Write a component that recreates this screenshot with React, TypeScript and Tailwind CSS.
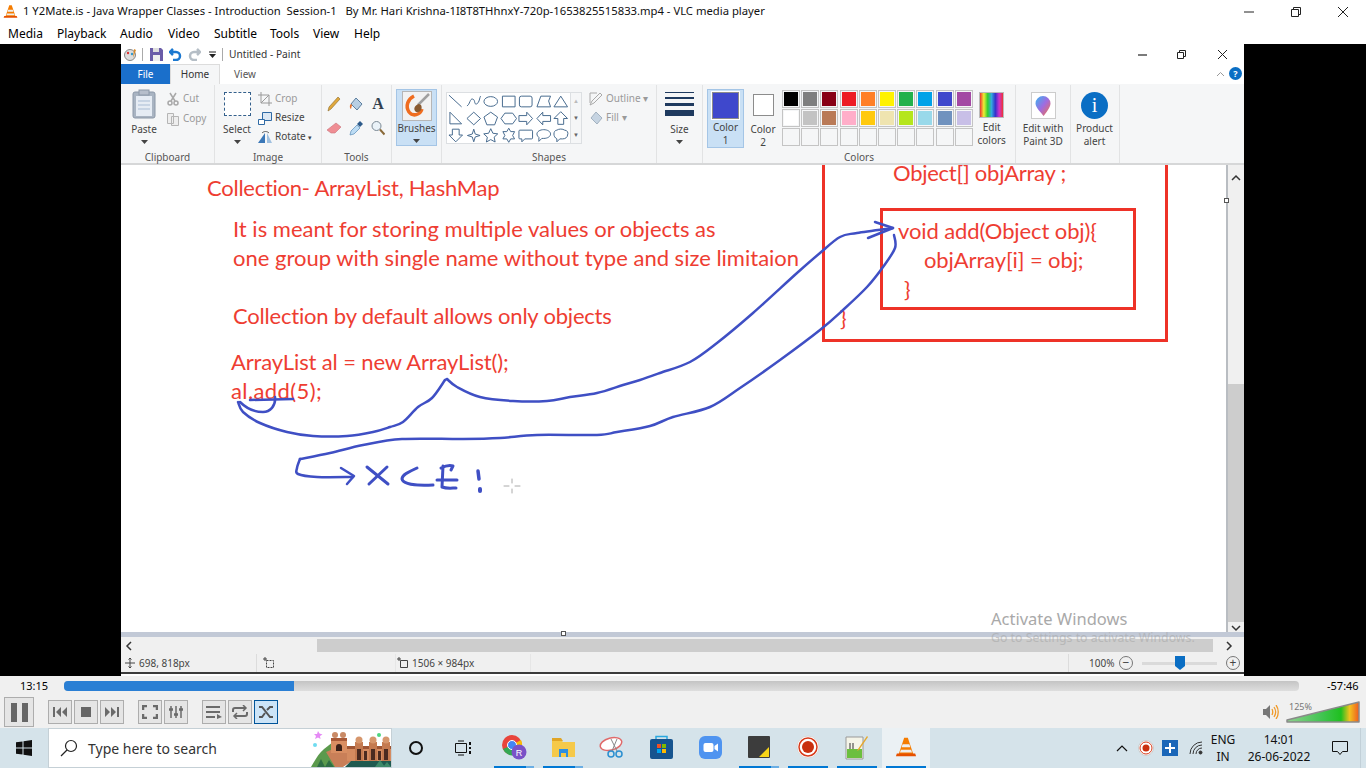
import React from "react";

const Cone = ({ s = 16 }: { s?: number }) => (
  <svg width={s} height={s} viewBox="0 0 24 24">
    <path d="M10 2h4l6 18H4z" fill="#f57c00" />
    <path d="M8.3 9h7.4l1 3.4H7.2zM6.4 15h11.2l1 3H5.4z" fill="#eee" />
    <path d="M2 19h20l1 3H1z" fill="#e65100" />
  </svg>
);

const Menu = () => (
  <div className="flex h-[21px] items-center bg-white pl-[8px] text-[12px] text-black">
    <span className="w-[49px]">Media</span>
    <span className="w-[63px]">Playback</span>
    <span className="w-[48px]">Audio</span>
    <span className="w-[46px]">Video</span>
    <span className="w-[56px]">Subtitle</span>
    <span className="w-[43px]">Tools</span>
    <span className="w-[41px]">View</span>
    <span>Help</span>
  </div>
);

const Title = () => (
  <div className="flex h-[23px] items-center bg-white">
    <div className="w-[23px] pl-[3px]"><Cone s={15} /></div>
    <span className="flex-1 whitespace-pre text-[11.270px] text-[#111]">1 Y2Mate.is - Java Wrapper Classes - Introduction  Session-1   By Mr. Hari Krishna-1I8T8THhnxY-720p-1653825515833.mp4 - VLC media player</span>
    <div className="flex w-[141px] items-center text-[#222]">
      <div className="flex w-[47px] justify-center"><svg width="12" height="12"><path d="M1 6h10" stroke="#222" /></svg></div>
      <div className="flex w-[47px] justify-center"><svg width="12" height="12" fill="none" stroke="#222"><path d="M1.500 3.500h7v7h-7zM3.500 3.500v-2h7v7h-2" /></svg></div>
      <div className="flex w-[47px] justify-center"><svg width="12" height="12" stroke="#222"><path d="M1 1l10 10M11 1L1 11" /></svg></div>
    </div>
  </div>
);

const Caret = () => <svg width="7" height="4" className="block"><path d="M0 0h7L3.500 4z" fill="#444" /></svg>;

const Big = ({ w, icon, lines, caret }: { w: string; icon: React.ReactNode; lines: string[]; caret?: boolean }) => (
  <div className={`flex flex-col items-center text-[10px] leading-[13px] text-[#444] ${w}`}>
    <div className="flex h-[38px] items-center justify-center">{icon}</div>
    {lines.map((l) => <span key={l}>{l}</span>)}
    {caret && <div className="mt-[4px]"><Caret /></div>}
  </div>
);

const Group = ({ w, label, children }: { w: string; label: string; children: React.ReactNode }) => (
  <div className={`flex h-full shrink-0 flex-col border-r border-[#e2e3e4] ${w}`}>
    <div className="flex h-[65px] items-start">{children}</div>
    <div className="flex h-[13px] items-center justify-center pt-[2px] text-[10px] text-[#555]">{label}</div>
  </div>
);

const SmallRow = ({ icon, text, gray }: { icon: React.ReactNode; text: React.ReactNode; gray?: boolean }) => (
  <div className={`flex h-[19px] items-center gap-[3px] text-[10px] ${gray ? "text-[#9a9a9a]" : "text-[#444]"}`}>
    <div className="flex w-[14px] justify-center">{icon}</div>
    <span>{text}</span>
  </div>
);

const ShapeCell = ({ d }: { d: string }) => (
  <svg width="17.500" height="17" viewBox="0 0 18 17" fill="none" stroke="#44688c" strokeWidth="1" className="shrink-0"><path d={d} /></svg>
);

const shapes = [
  "M2 2l13 12", "M2 13c3-1 3-8 6-7s1 6 4 5 3-7 4-8", "M2 8.500a7 5 0 1 0 14 0a7 5 0 1 0 -14 0", "M2.500 3h13v11h-13z", "M4.500 3h9a2 2 0 0 1 2 2v7a2 2 0 0 1 -2 2h-9a2 2 0 0 1 -2-2v-7a2 2 0 0 1 2-2z", "M6 3h10l-2 5 2 6H2z", "M9 3l7 11H2z",
  "M3 2l12 12H3z", "M9 2l7 6.500-7 6.500-7-6.500z", "M9 2l7 5-3 8H5L2 7z", "M5 3h8l4 5.500-4 5.500H5L1 8.500z", "M2 5.500h8V2l6 6.500-6 6.500v-3.500H2z", "M16 5.500H8V2L2 8.500 8 15v-3.500h8z", "M9 1.500l7 7h-4v6H6v-6H2z",
  "M5.500 2h7v6H16l-7 7-7-7h3.500z", "M9 2l1.500 5 5 1.500-5 1.500L9 15l-1.500-5-5-1.500 5-1.500z", "M9 1.500l2.200 4.700 5 .6-3.700 3.400 1 5L9 12.700l-4.500 2.500 1-5-3.700-3.400 5-.6z", "M9 1l2 3.500h4L13 8.500l2 3.500h-4l-2 3.500L7 12H3l2-3.500L3 4.500h4z", "M3 3h12a1 1 0 0 1 1 1v7a1 1 0 0 1-1 1H8l-3 3v-3H3a1 1 0 0 1-1-1V4a1 1 0 0 1 1-1z", "M9 2.500c4 0 7 2 7 4.500s-3 4.500-7 4.500H7l-3 3v-4c-1-1-2-2-2-3.500 0-2.500 3-4.500 7-4.500z", "M5 3c2-1.500 6-1.500 8 0 3 0 4 3 3 5 0 2-2 4-5 4H8l-3 3v-3c-2-1-3-3-3-5s1-4 3-4z",
];

const row1 = ["#000000", "#7f7f7f", "#880015", "#ed1c24", "#ff7f27", "#fff200", "#22b14c", "#00a2e8", "#3f48cc", "#a349a4"];
const row2 = ["#ffffff", "#c3c3c3", "#b97a57", "#ffaec9", "#ffc90e", "#efe4b0", "#b5e61d", "#99d9ea", "#7092be", "#c8bfe7"];
const row3 = Array.from({ length: 10 }, () => "#f5f6f7");

const Swatches = ({ colors }: { colors: string[] }) => (
  <div className="flex gap-[1.200px]">
    {colors.map((c, i) => (
      <div key={i} className="h-[18px] w-[18px] border border-[#c4c4c4] bg-[#f5f6f7] p-[1px]">
        <div className="h-full w-full" style={{ background: c }} />
      </div>
    ))}
  </div>
);

const Ribbon = () => (
  <div className="flex h-[81px] border-b-2 border-[#d6d7d8] bg-[#f5f6f7] pt-[1px]">
    <Group w="w-[94px]" label="Clipboard">
      <div className="flex pl-[7px]">
        <Big w="w-[32px]" lines={["Paste"]} caret icon={
          <svg width="24" height="30" viewBox="0 0 24 30"><rect x="1" y="3" width="22" height="26" rx="2" fill="#a9b4c2" stroke="#8c98a8" /><rect x="4" y="7" width="16" height="20" fill="#e6ecf4" /><path d="M6 12h12M6 16h12M6 20h12" stroke="#a9bcd4" /><rect x="7" y="1" width="10" height="5" fill="#b6becb" stroke="#8c98a8" /></svg>
        } />
        <div className="ml-[6px] mt-[4px] flex flex-col gap-[1px]">
          <SmallRow gray text="Cut" icon={<svg width="12" height="14" fill="none" stroke="#a8a8a8" strokeWidth="1.500"><path d="M3 1l5 8M9 1L4 9" /><circle cx="3" cy="11" r="2" /><circle cx="9" cy="11" r="2" /></svg>} />
          <SmallRow gray text="Copy" icon={<svg width="14" height="14" fill="#eee" stroke="#b5b5b5"><path d="M1.500 1.500h6v10h-6zM5.500 4.500h7v9h-7z" /></svg>} />
        </div>
      </div>
    </Group>
    <Group w="w-[107px]" label="Image">
      <div className="flex pl-[5px]">
        <Big w="w-[34px]" lines={["Select"]} caret icon={<div className="h-[24px] w-[27px] border border-dashed border-[#34608c] bg-white" />} />
        <div className="ml-[4px] mt-[4px] flex flex-col">
          <SmallRow gray text="Crop" icon={<svg width="14" height="14" fill="none" stroke="#9a9a9a"><path d="M3 0v11h11M0 3h11v11M3 11L11 3" /></svg>} />
          <SmallRow text="Resize" icon={<svg width="14" height="14" fill="none" stroke="#2f6aa5"><path d="M4.500 1.500h9v8h-9z" fill="#dce8f4" /><path d="M.5 8.500h6v5h-6z" fill="#fff" /></svg>} />
          <SmallRow text={<>Rotate <span className="text-[7px]">▾</span></>} icon={<svg width="15" height="14"><path d="M0 13L7 3v10z" fill="#3b78b8" /><path d="M9 13V3l5 10z" fill="#9fc0e0" /><path d="M4 3c2-2 5-2 7 0" stroke="#555" fill="none" /></svg>} />
        </div>
      </div>
    </Group>
    <Group w="w-[70px]" label="Tools">
      <div className="grid grid-cols-3 gap-x-[8px] gap-y-[8px] pl-[5px] pt-[11px]">
        <svg width="14" height="16" viewBox="0 0 14 16"><path d="M11 1l2 2L4 13l-3 2 1-4z" fill="#e0a83c" stroke="#8a6a2a" strokeWidth=".6" /></svg>
        <svg width="14" height="16" viewBox="0 0 14 16"><path d="M7 2l6 6-5 6-6-6z" fill="#b8cfe4" stroke="#5d7f9f" /><path d="M2 8C0 9 1 13 2 13l1-4z" fill="#e8732c" /></svg>
        <span className="flex w-[14px] justify-center font-['Liberation_Serif',serif] text-[16px] font-bold leading-[16px] text-[#33404f]">A</span>
        <svg width="14" height="16" viewBox="0 0 14 16"><path d="M9 3l5 4-6 6H4L0 10z" fill="#ef8e94" stroke="#c9727a" strokeWidth=".6" /></svg>
        <svg width="14" height="16" viewBox="0 0 14 16"><path d="M1 15l1-4 6-6 3 3-6 6z" fill="#bcdcf4" stroke="#5a8cb8" strokeWidth=".7" /><path d="M8 4l3-3 3 3-3 3z" fill="#2c5a8a" /></svg>
        <svg width="14" height="16" viewBox="0 0 14 16" fill="none"><circle cx="5.500" cy="6" r="4.500" stroke="#7a8894" fill="#eaf2f8" /><path d="M9 9.500l4.500 5" stroke="#8a6a3a" strokeWidth="2" /></svg>
      </div>
    </Group>
    <Group w="w-[50px]" label="">
      <div className="ml-[4px] mt-[4px] flex h-[57px] w-[41px] flex-col items-center border border-[#a4c5e6] bg-[#c9e0f5] text-[10px] leading-[13px] text-[#444]">
        <div className="mt-[1px] flex h-[30px] w-[30px] items-center justify-center border border-[#b6b6b6] bg-[#f2f2f2]">
          <svg width="28" height="28" viewBox="0 0 28 28" fill="none"><path d="M11 4C5 7 2 14 6 20c4 5 11 3 13-3" stroke="#ef6c1f" strokeWidth="3.500" /><path d="M26 2L15 13" stroke="#a0a0a0" strokeWidth="2.500" /><path d="M16 12c-5 1-6 6-3 8 4 1 7-3 5-7z" fill="#8a5a30" /></svg>
        </div>
        <span className="mt-[1px]">Brushes</span>
        <div className="mt-[4px]"><Caret /></div>
      </div>
    </Group>
    <Group w="w-[215px]" label="Shapes">
      <div className="ml-[4px] mt-[7px] flex">
        <div className="flex h-[52px] w-[125px] flex-wrap content-start border border-[#dcdfe2] bg-white">
          {shapes.map((d, i) => <ShapeCell key={i} d={d} />)}
        </div>
        <div className="flex h-[52px] w-[11px] flex-col items-center justify-around border border-l-0 border-[#dcdfe2] text-[6px] leading-[6px] text-[#666]">
          <span className="text-[#bbb]">▲</span><span>▼</span><span>▼</span>
        </div>
        <div className="-mt-[3px] ml-[7px] flex flex-col text-[10px] text-[#999]">
          <SmallRow gray text="Outline ▾" icon={<svg width="14" height="14" fill="none" stroke="#aaa"><path d="M1 13l2-4 8-8 2 2-8 8zM1 1h7M1 1v10" /></svg>} />
          <SmallRow gray text="Fill ▾" icon={<svg width="14" height="14" fill="#c6d4e2" stroke="#a3b2c0"><path d="M7 1l6 6-5 6-6-6z" /></svg>} />
        </div>
      </div>
    </Group>
    <Group w="w-[46px]" label="">
      <Big w="w-[45px]" lines={["Size"]} caret icon={
        <div className="flex w-[29px] flex-col gap-[4px]">
          <div className="h-[1px] bg-[#1f3a5f]" />
          <div className="h-[2px] bg-[#1f3a5f]" />
          <div className="h-[3px] bg-[#1f3a5f]" />
          <div className="h-[6px] bg-[#1f3a5f]" />
        </div>
      } />
    </Group>
    <Group w="w-[313px]" label="Colors">
      <div className="flex">
        <div className="ml-[4px] mt-[4px] flex h-[59px] w-[37px] flex-col items-center border border-[#a4c5e6] bg-[#c9e0f5] text-[10px] leading-[13px] text-[#444]">
          <div className="mt-[2px] h-[29px] w-[27px] border border-[#8c8c8c] bg-[#3f48cc] outline outline-[#fff]" />
          <span className="mt-[2px]">Color</span><span>1</span>
        </div>
        <div className="flex w-[38px] flex-col items-center pt-[9px] text-[10px] leading-[13px] text-[#444]">
          <div className="h-[22px] w-[21px] border border-[#8c8c8c] bg-white" />
          <span className="mt-[7px]">Color</span><span>2</span>
        </div>
        <div className="mt-[5px] flex flex-col gap-[1px]">
          <Swatches colors={row1} /><Swatches colors={row2} /><Swatches colors={row3} />
        </div>
        <div className="ml-[1px] flex w-[36px] flex-col items-center pt-[7px] text-[10px] leading-[13px] text-[#444]">
          <div className="h-[26px] w-[25px] border border-[#bbb] bg-[linear-gradient(90deg,#e33,#ee3,#3c3,#3ad,#33c,#c3c,#e33)]" />
          <span className="mt-[3px]">Edit</span><span>colors</span>
        </div>
      </div>
    </Group>
    <Group w="w-[55px]" label="">
      <div className="flex w-[54px] flex-col items-center pt-[7px] text-[10px] leading-[13px] text-[#444]">
        <div className="flex h-[27px] w-[25px] items-center justify-center border border-[#ccc] bg-white">
          <svg width="16" height="22" viewBox="0 0 16 22"><defs><linearGradient id="p3d" x1="0" y1="0" x2="1" y2="1"><stop offset="0" stopColor="#35b6f2" /><stop offset=".5" stopColor="#a06be0" /><stop offset="1" stopColor="#f9703e" /></linearGradient></defs><path d="M8 1a7.500 7.500 0 0 1 7.500 7.500c0 4-5 10-7 12.500C6.500 18 .5 12.500.5 8.500A7.500 7.500 0 0 1 8 1z" fill="url(#p3d)" /></svg>
        </div>
        <span className="mt-[3px] whitespace-nowrap">Edit with</span><span>Paint 3D</span>
      </div>
    </Group>
    <Group w="w-[49px]" label="">
      <div className="flex w-[47px] flex-col items-center pt-[7px] text-[10px] leading-[13px] text-[#444]">
        <div className="flex h-[27px] w-[27px] items-center justify-center rounded-full bg-[#0a6ec4] font-['Liberation_Serif',serif] text-[20px] text-white">i</div>
        <span className="mt-[3px]">Product</span><span>alert</span>
      </div>
    </Group>
    <div className="flex-1" />
  </div>
);

const smooth = (p: number[][]) => {
  let d = `M${p[0][0]} ${p[0][1]}`;
  for (let i = 0; i < p.length - 1; i++) {
    const a = p[Math.max(i - 1, 0)], b = p[i], c = p[i + 1], e = p[Math.min(i + 2, p.length - 1)];
    d += `C${b[0] + (c[0] - a[0]) / 6} ${b[1] + (c[1] - a[1]) / 6} ${c[0] - (e[0] - b[0]) / 6} ${c[1] - (e[1] - b[1]) / 6} ${c[0]} ${c[1]}`;
  }
  return d;
};

const upperA = [[238, 402], [243, 412], [260, 423], [287, 432], [313, 436], [347, 436], [373, 432], [390, 427], [403, 422], [418, 407], [432, 398], [445, 380]];
const upperB = [[447, 379], [457, 387], [480, 397], [513, 401], [547, 401], [570, 397], [597, 393], [623, 385], [640, 380], [660, 373], [690, 362], [717, 343], [753, 313], [797, 273], [820, 253], [840, 237], [857, 233], [893, 228]];
const lowerA = [[894, 235], [895, 248], [883, 267], [867, 287], [843, 310], [820, 330], [780, 360], [740, 388], [710, 407], [673, 417], [650, 426], [617, 432], [597, 435], [537, 435], [500, 438], [463, 439], [402, 439], [363, 445], [330, 453], [300, 459]];
const lowerB = [[300, 459], [297, 468], [298, 474], [317, 477], [353, 477]];

const Strokes = () => (
  <svg className="absolute inset-0" width="1105" height="467" viewBox="121 165 1105 467" fill="none" stroke="#3f4fc4" strokeWidth="2.500" strokeLinecap="round" strokeLinejoin="round">
    <path d={smooth(upperA)} />
    <path d={smooth(upperB)} />
    <path d="M445 380L447 379" />
    <path d={smooth(lowerA)} />
    <path d={smooth(lowerB)} />
    <path d="M875 222L893 228L868 238" />
    <path d="M341 468L354 476L347 484" />
    <path d="M367 467L388 484M387 467L369 484" strokeWidth="3" />
    <path d="M417 468C408 472 402 475 402 479C403 484 415 486 433 485" strokeWidth="3" />
    <path d="M441 468C445 466 450 465 453 466L451 470M443 466L442 487C447 489 452 488 456 488M437 480H457" strokeWidth="3" />
    <path d="M478 471L479 479" strokeWidth="3.500" />
    <path d="M480 489L480 491" strokeWidth="4" />
    <path d="M250 400L293 399" />
    <path d="M240 402C246 408 254 412 263 412C270 412 276 406 275 397" />
    <path d="M504 486H509M515 486H520M512 479V483M512 489V493" stroke="#aaa" strokeWidth="1" />
  </svg>
);

const Canvas = () => (
  <div className="relative h-[467px] w-[1105px] shrink-0 bg-white font-['Lato',sans-serif] text-[22px] leading-[30px] text-[#ee3d32] whitespace-pre">
    <span className="absolute left-[86px] top-[8px] tracking-[-0.25px]">Collection- ArrayList, HashMap</span>
    <span className="absolute left-[112px] top-[49px]">It is meant for storing multiple values or objects as</span>
    <span className="absolute left-[112px] top-[78px]">one group with single name without type and size limitaion</span>
    <span className="absolute left-[112px] top-[136px] tracking-[-0.2px]">Collection by default allows only objects</span>
    <span className="absolute left-[110px] top-[182px] tracking-[-0.13px]">ArrayList al = new ArrayList();</span>
    <span className="absolute left-[110px] top-[211px] tracking-[0.4px]">al.add(5);</span>
    <div className="absolute left-[701px] top-0 h-[177px] w-[346px] border-[3px] border-t-0 border-[#ee3228]" />
    <div className="absolute left-[759px] top-[43px] h-[102px] w-[256px] border-[3px] border-[#ee3228]" />
    <span className="absolute left-[772px] top-[0px] leading-[16px] tracking-[-0.25px]">Object[] objArray ;</span>
    <span className="absolute left-[777px] top-[51px] tracking-[-0.1px]">void add(Object obj){"{"}</span>
    <span className="absolute left-[803px] top-[80px] tracking-[-0.1px]">objArray[i] = obj;</span>
    <span className="absolute left-[783px] top-[109px]">{"}"}</span>
    <span className="absolute left-[719px] top-[138px]">{"}"}</span>
    <Strokes />
  </div>
);

const VScroll = () => (
  <div className="flex h-[467px] flex-1 flex-col items-center border-l-2 border-[#b9bdc2] bg-[#f0f0f0]">
    <div className="flex h-[17px] items-center pt-[8px] text-[#444]"><svg width="10" height="7" fill="none" stroke="#333" strokeWidth="1.500"><path d="M1 6l4-4 4 4" /></svg></div>
    <div className="mt-[202px] h-[238px] w-full bg-[#cdcdcd]" />
    <div className="mt-[3px] flex h-[7px] items-center"><svg width="10" height="7" fill="none" stroke="#333" strokeWidth="1.500"><path d="M1 1l4 4 4-4" /></svg></div>
  </div>
);

const Status = () => (
  <div className="flex h-[20px] items-center border-b-2 border-[#3c3c3c] bg-[#f0f0f0] text-[10px] text-[#444]">
    <div className="flex h-full w-[136px] items-center gap-[3px] border-r border-[#dcdcdc] pl-[3px]">
      <svg width="12" height="12" fill="none" stroke="#444"><path d="M6 1v10M1 6h10M4.500 2.500L6 1l1.500 1.500M4.500 9.500L6 11l1.500-1.500" /></svg>
      <span>698, 818px</span>
    </div>
    <div className="flex h-full w-[139px] items-center border-r border-[#e6e6e6] pl-[5px]">
      <svg width="13" height="12" fill="none" stroke="#444"><path d="M3 0v4M1 2h4" /><path d="M4.500 3.500h7v7h-7z" strokeDasharray="2 1" /></svg>
    </div>
    <div className="flex h-full w-[135px] items-center gap-[3px] border-r border-[#e6e6e6]">
      <svg width="13" height="12" fill="none" stroke="#444"><path d="M3 0v4M1 2h4M4.500 3.500h7v7h-7z" /></svg>
      <span>1506 × 984px</span>
    </div>
    <div className="flex-1" />
    <div className="flex h-full w-[176px] items-center border-l border-[#dcdcdc] pl-[20px]">
      <span className="w-[30px]">100%</span>
      <div className="flex h-[14px] w-[14px] items-center justify-center rounded-full border border-[#777] text-[12px] leading-none">−</div>
      <div className="relative ml-[9px] h-[3px] w-[75px] bg-[#dadada]">
        <svg width="10" height="14" className="absolute left-[33px] top-[-6px]"><path d="M0 0h10v10l-5 4-5-4z" fill="#0a6ec4" /></svg>
      </div>
      <div className="ml-[9px] flex h-[14px] w-[14px] items-center justify-center rounded-full border border-[#777] text-[12px] leading-none">+</div>
    </div>
  </div>
);

const Paint = () => (
  <div className="relative ml-[121px] flex h-[632px] w-[1123px] flex-col overflow-hidden bg-white">
    <div className="flex h-[20px] items-center bg-white pl-[2px] pt-[1px] text-[10.200px] text-[#333]">
      <svg width="14" height="14" viewBox="0 0 14 14"><circle cx="7" cy="7" r="5.500" fill="#ddd" stroke="#888" /><circle cx="5" cy="5" r="1.200" fill="#d33" /><circle cx="9" cy="6" r="1.200" fill="#39c" /><path d="M11 1l2 1-3 8z" fill="#d88a2a" /></svg>
      <div className="ml-[5px] h-[13px] w-px bg-[#aaa]" />
      <svg className="ml-[7px]" width="13" height="13" viewBox="0 0 13 13"><path d="M0 0h11l2 2v11H0z" fill="#6a5ca8" /><path d="M3 0h6v4H3z" fill="#ddd" /><path d="M3 7h7v6H3z" fill="#eee" /></svg>
      <svg className="ml-[6px]" width="13" height="13" viewBox="0 0 13 13" fill="none" stroke="#1b78d0" strokeWidth="2.500"><path d="M1 4h6a4 4 0 0 1 0 8H4" /><path d="M4 1L1 4l3 3" /></svg>
      <svg className="ml-[6px]" width="13" height="13" viewBox="0 0 13 13" fill="none" stroke="#b5bec6" strokeWidth="2.500"><path d="M12 4H6a4 4 0 0 0 0 8h3" /><path d="M9 1l3 3-3 3" /></svg>
      <svg className="ml-[8px]" width="7" height="7"><path d="M0 1h7" stroke="#222" /><path d="M0 3h7L3.500 7z" fill="#222" /></svg>
      <div className="ml-[6px] h-[13px] w-px bg-[#aaa]" />
      <span className="ml-[6px]">Untitled - Paint</span>
      <div className="flex-1" />
      <div className="flex w-[39px] justify-center"><svg width="11" height="11"><path d="M1 6h9" stroke="#222" strokeWidth="1.200" /></svg></div>
      <div className="flex w-[39px] justify-center"><svg width="11" height="11" fill="none" stroke="#222"><path d="M1.500 3.500h6v6h-6zM3.500 3.500v-2h6v6h-2" /></svg></div>
      <div className="flex w-[43px] justify-center"><svg width="11" height="11" stroke="#222"><path d="M1 1l9 9M10 1l-9 9" /></svg></div>
    </div>
    <div className="flex h-[20px] items-stretch text-[10px]">
      <div className="flex w-[49px] items-center justify-center bg-[#1a6fcb] text-white">File</div>
      <div className="flex w-[50px] items-center justify-center border-x border-t border-[#dcdcdc] bg-[#f5f6f7] text-[#333]">Home</div>
      <div className="flex w-[50px] items-center justify-center text-[#555]">View</div>
      <div className="flex-1" />
      <div className="flex w-[18px] items-center justify-center"><svg width="9" height="6" fill="none" stroke="#999"><path d="M1 5l3.500-3.500L8 5" /></svg></div>
      <div className="mr-[2px] mt-[3px] flex h-[13px] w-[13px] items-center justify-center rounded-full bg-[#0a6ec4] text-[9px] font-bold text-white">?</div>
    </div>
    <Ribbon />
    <div className="flex">
      <Canvas />
      <VScroll />
    </div>
    <div className="h-[5px] bg-[#c2c9d6]" />
    <div className="flex h-[17px] items-center bg-[#f0f0f0]">
      <div className="flex w-[196px] pl-[4px]"><svg width="8" height="10" fill="none" stroke="#333" strokeWidth="1.500"><path d="M6 1L2 5l4 4" /></svg></div>
      <div className="h-[13px] w-[896px] bg-[#cdcdcd]" />
      <div className="flex flex-1 justify-center"><svg width="8" height="10" fill="none" stroke="#333" strokeWidth="1.500"><path d="M2 1l4 4-4 4" /></svg></div>
    </div>
    <Status />
    <div className="absolute left-[440px] top-[587px] h-[5px] w-[5px] border border-[#555] bg-white" />
    <div className="absolute left-[1103px] top-[154px] h-[5px] w-[5px] border border-[#555] bg-white" />
    <div className="pointer-events-none absolute left-[870px] top-[565px] text-[#a9a9a9]">
      <div className="text-[16.500px] leading-[20px]">Activate Windows</div>
      <div className="mt-[2px] text-[12.300px] leading-[14px] opacity-60">Go to Settings to activate Windows.</div>
    </div>
  </div>
);

const Ctl = ({ children, on }: { children: React.ReactNode; on?: boolean }) => (
  <div className={`flex h-[24px] w-[24px] items-center justify-center border ${on ? "border-[#005499] bg-[#cce4f7]" : "border-[#adadad] bg-[#e5e5e5]"}`}>{children}</div>
);

const g = "#6a6a6a";

const Vlc = () => (
  <div className="h-[52px] bg-[#f0f0f0]">
    <div className="flex h-[20px] items-center">
      <span className="w-[64px] pl-[20px] text-[11px] text-black">13:15</span>
      <div className="h-[10px] w-[1235px] overflow-hidden rounded-[4px] bg-[linear-gradient(#c4c4c4,#dedede)]">
        <div className="h-full w-[230px] bg-[#2a7fd4]" />
      </div>
      <span className="ml-[28px] text-[11px] text-black">-57:46</span>
    </div>
    <div className="flex h-[32px] items-center pl-[4px]">
      <div className="flex h-[30px] w-[30px] items-center justify-center gap-[5px] border border-[#adadad] bg-[#e5e5e5]">
        <div className="h-[19px] w-[6px] bg-[#666]" /><div className="h-[19px] w-[6px] bg-[#666]" />
      </div>
      <div className="ml-[14px] flex gap-[2px]">
        <Ctl><svg width="14" height="10" fill={g}><path d="M0 0h2v10H0zM8 0v10L3 5zM14 0v10L9 5z" /></svg></Ctl>
        <Ctl><div className="h-[10px] w-[10px] bg-[#666]" /></Ctl>
        <Ctl><svg width="14" height="10" fill={g}><path d="M14 0h-2v10h2zM6 0v10l5-5zM0 0v10l5-5z" /></svg></Ctl>
      </div>
      <div className="ml-[14px] flex gap-[2px]">
        <Ctl><svg width="16" height="14" fill="none" stroke={g} strokeWidth="2.500"><path d="M1 5V1h4M11 1h4v4M15 9v4h-4M5 13H1V9" /></svg></Ctl>
        <Ctl><svg width="16" height="14" fill="none" stroke={g}><path d="M3 1v12M8 1v12M13 1v12" strokeWidth="1.500" /><path d="M1 4.500h4M6 9.500h4M11 4.500h4" strokeWidth="2.500" /></svg></Ctl>
      </div>
      <div className="ml-[14px] flex gap-[2px]">
        <Ctl><svg width="16" height="14" fill={g}><path d="M0 1h14v2H0zM0 6h14v2H0zM0 11h9v2H0zM11 9l5 3-5 2z" /></svg></Ctl>
        <Ctl><svg width="16" height="14" fill="none" stroke={g} strokeWidth="2"><path d="M1 7V5a2 2 0 0 1 2-2h11M15 7v2a2 2 0 0 1-2 2H2" /><path d="M11 0l3 3-3 3M5 8l-3 3 3 3" strokeWidth="1.500" /></svg></Ctl>
        <Ctl on><svg width="16" height="14" fill="none" stroke="#555" strokeWidth="2"><path d="M1 2h3l8 10h3M1 12h3l3-4M9 5l3-3h3" /></svg></Ctl>
      </div>
      <div className="flex-1" />
      <div className="flex items-center">
        <svg width="16" height="14" viewBox="0 0 16 14"><path d="M0 4h3l4-4v14l-4-4H0z" fill="#777" /><path d="M9 4c1 2 1 4 0 6M11 2c2 3 2 7 0 10M13 0c3 4 3 10 0 14" fill="none" stroke="#f09a2a" strokeWidth="1.300" /></svg>
        <div className="relative ml-[7px] mr-[6px] h-[22px] w-[74px]">
          <svg width="74" height="22" className="absolute left-0 top-0"><defs><linearGradient id="vol" x1="0" y1="0" x2="1" y2="0"><stop offset="0" stopColor="#8fd08f" /><stop offset=".5" stopColor="#3fc44f" /><stop offset=".75" stopColor="#1fc01f" /><stop offset=".87" stopColor="#f2c21f" /><stop offset="1" stopColor="#ef5a1f" /></linearGradient></defs><path d="M1 19L73 1V21H1z" fill="url(#vol)" stroke="#8a8a8a" strokeWidth="1.500" strokeLinejoin="round" /></svg>
          <span className="absolute left-[3px] top-[-1px] text-[9px] text-[#777]">125%</span>
        </div>
      </div>
    </div>
  </div>
);

const TI = ({ children, bar, active, split }: { children: React.ReactNode; bar?: boolean; active?: boolean; split?: boolean }) => (
  <div className={`flex h-full w-[48px] shrink-0 flex-col items-center ${active ? "bg-[#ebf1f4]" : ""}`}>
    <div className="flex flex-1 items-center justify-center">{children}</div>
    {bar ? (
      <div className="flex h-[2px] w-[40px]"><div className={`h-full bg-[#0078d4] ${split ? "w-[32px]" : "w-[40px]"}`} />{split && <div className="h-full w-[8px] bg-[#6aaee4]" />}</div>
    ) : <div className="h-[2px]" />}
  </div>
);

const Doodle = () => (
  <svg width="80" height="38" viewBox="0 0 80 38" className="absolute right-0 top-0">
    <path d="M0 38C4 31 8 24 13 20L22 13L30 38z" fill="#5b9a4d" />
    <path d="M6 38l4-8 4 8zM14 38l4-7 5 7z" fill="#2f6f45" />
    <path d="M15 23L22 20H44V30L32 38H24z" fill="#c97f58" />
    <path d="M20 9H36V24H20z" fill="#d98e62" />
    <path d="M20 9H36V12H20z" fill="#a95a38" />
    <circle cx="24" cy="6" r="3" fill="#c98a66" /><circle cx="32" cy="6" r="3" fill="#c98a66" />
    <path d="M25 22v-4a3 3 0 0 1 6 0v4z" fill="#3a2018" />
    <path d="M36 17H80V32H36z" fill="#d58b60" />
    <path d="M36 17H80V20H36z" fill="#9f5534" />
    <path d="M44 13H52V32H44zM58 13H66V32H58zM71 13H79V32H71z" fill="#c47a50" />
    <circle cx="48" cy="11" r="3.500" fill="#d6966c" /><circle cx="62" cy="11" r="3.500" fill="#d6966c" /><circle cx="75" cy="11" r="3.500" fill="#d6966c" />
    <path d="M46 20h4v11h-4zM60 20h4v11h-4zM73 20h4v11h-4zM53 22h3v9h-3zM67 22h3v9h-3z" fill="#4a2a20" />
    <path d="M7 2l1.500 2.500 3 1-2.500 1.500.5 3-2.500-1.500-3 1.500 1-3-2-2 3 0z" fill="#e58af5" />
    <circle cx="4" cy="16" r="2" fill="#6fdcf0" /><circle cx="68" cy="6" r="2" fill="#4fd67f" />
    <path d="M34 38l6-6H80V38z" fill="#1f5a50" />
    <path d="M64 38l5-7 5 7zM72 38l4-5 4 5z" fill="#3d8a6a" />
  </svg>
);

const Taskbar = () => (
  <div className="flex h-[40px] items-stretch bg-[#d5e3ea] text-[#111]">
    <div className="flex w-[48px] items-center justify-center">
      <svg width="16" height="16" fill="#111"><path d="M0 2.300L6.500 1.400V7.500H0zM7.500 1.200L16 0V7.500H7.500zM0 8.500H6.500V14.600L0 13.700zM7.500 8.500H16V16L7.500 14.800z" /></svg>
    </div>
    <div className="relative flex w-[344px] items-center border border-[#c5d0d6] bg-white pl-[11px] text-[14px] text-[#333]">
      <svg width="18" height="18" fill="none" stroke="#222" strokeWidth="1.200"><circle cx="11" cy="7" r="5.500" /><path d="M7 11l-6 6" /></svg>
      <span className="ml-[10px]">Type here to search</span>
      <Doodle />
    </div>
    <div className="flex w-[47px] items-center justify-center"><div className="h-[14px] w-[14px] rounded-full border-2 border-[#111]" /></div>
    <div className="flex w-[47px] items-center justify-center"><svg width="18" height="16" fill="none" stroke="#111"><path d="M1.500 3.500h11v9h-11zM4 1h6M4 15h6" /><path d="M16 2v3M16 7v2M16 11v3" strokeWidth="2" /></svg></div>
    <div className="flex h-full items-stretch gap-[1px] pl-[4px]">
      <TI bar split><svg width="26" height="26" viewBox="0 0 26 26"><circle cx="11" cy="11" r="10" fill="#e8453c" /><path d="M11 11L20 6a10 10 0 0 1-6 14z" fill="#fbbc05" /><path d="M11 11l3 10a10 10 0 0 1-12-6z" fill="#34a853" /><circle cx="11" cy="11" r="4.500" fill="#4285f4" stroke="#fff" /><circle cx="18" cy="18" r="7.500" fill="#7a52c7" /><text x="18" y="21.500" fontSize="9" fill="#fff" textAnchor="middle" fontFamily="Liberation Sans">R</text></svg></TI>
      <TI bar split><svg width="23" height="19" viewBox="0 0 23 19"><path d="M0 2h9l2 2h12v15H0z" fill="#f5c94a" /><path d="M0 0h9l2 3H0z" fill="#e0a526" /><path d="M7 11h9v8h-2v-4H9v4H7z" fill="#2e8fe0" /></svg></TI>
      <TI><svg width="26" height="24" viewBox="0 0 26 24" fill="none"><ellipse cx="12" cy="9" rx="11" ry="6" transform="rotate(-15 12 9)" fill="#fff" stroke="#e06a6a" strokeWidth="1.500" /><path d="M12 4l6 12M18 4L13 16" stroke="#888" /><circle cx="12" cy="19" r="3" stroke="#2a8fd0" strokeWidth="1.500" /><circle cx="20" cy="19" r="3" stroke="#2a8fd0" strokeWidth="1.500" /></svg></TI>
      <TI><svg width="23" height="24" viewBox="0 0 23 24"><path d="M6 4V1.500h11V4" stroke="#2aa8e0" strokeWidth="1.500" fill="none" /><rect y="4" width="23" height="20" rx="2" fill="#16548f" /><path d="M7 9h4v4H7z" fill="#f25022" /><path d="M12 9h4v4h-4z" fill="#7fba00" /><path d="M7 14h4v4H7z" fill="#00a4ef" /><path d="M12 14h4v4h-4z" fill="#ffb900" /></svg></TI>
      <TI><svg width="23" height="23" viewBox="0 0 23 23"><rect width="23" height="23" rx="6" fill="#4f94f0" /><rect x="4.500" y="7" width="10" height="9" rx="2" fill="#fff" /><path d="M15.500 10l3.500-2.500v8L15.500 13z" fill="#fff" /></svg></TI>
      <TI bar split><svg width="22" height="22"><rect width="22" height="22" rx="1" fill="#3c3c3c" /><path d="M11 21l10-10v10z" fill="#f7d417" /></svg></TI>
      <TI bar><svg width="24" height="24" viewBox="0 0 24 24"><circle cx="12" cy="12" r="11" fill="#fff" stroke="#d9d9d9" /><circle cx="12" cy="12" r="9" fill="none" stroke="#d83a1a" strokeWidth="1.500" /><circle cx="12" cy="12" r="6" fill="#c9300f" /></svg></TI>
      <TI bar><svg width="24" height="25" viewBox="0 0 24 25"><path d="M1 2h17v22H1z" fill="#f4f4e8" stroke="#999" /><path d="M2 14h15v9H2z" fill="#6cbf3f" /><path d="M5 8v6M8 8v6" stroke="#333" /><path d="M22 1l1 1-9 13-2 1 1-2z" fill="#e6a82c" /></svg></TI>
      <TI bar active><Cone s={22} /></TI>
    </div>
    <div className="flex-1" />
    <div className="flex h-full items-center text-[12px]">
      <div className="flex w-[24px] justify-center"><svg width="12" height="7" fill="none" stroke="#111" strokeWidth="1.200"><path d="M1 6l5-5 5 5" /></svg></div>
      <div className="flex w-[24px] justify-center"><svg width="16" height="16"><circle cx="8" cy="8" r="7.500" fill="#fff" stroke="#ccc" /><circle cx="8" cy="8" r="6" fill="none" stroke="#d83a1a" /><circle cx="8" cy="8" r="3.500" fill="#c9300f" /></svg></div>
      <div className="flex w-[24px] justify-center"><svg width="16" height="16"><rect width="16" height="16" fill="#1a66b8" /><path d="M8 3v10M3 8h10" stroke="#fff" strokeWidth="2" /></svg></div>
      <div className="flex w-[28px] justify-center"><svg width="14" height="14" fill="none" stroke="#333"><path d="M1 13a12 12 0 0 1 12-12M4 13a9 9 0 0 1 9-9M7 13a6 6 0 0 1 6-6" /><circle cx="11.500" cy="11.500" r="1.500" fill="#333" /></svg></div>
      <div className="flex w-[26px] flex-col items-center leading-[17px]"><span>ENG</span><span>IN</span></div>
      <div className="flex w-[84px] flex-col items-center pl-[2px] leading-[17px]"><span>14:01</span><span>26-06-2022</span></div>
      <div className="flex w-[40px] justify-center"><svg width="16" height="15" fill="none" stroke="#111"><path d="M.5.500h15v10h-5l-2.500 3-2.500-3h-5z" /></svg></div>
    </div>
    <div className="w-[6px] border-l border-[#c2d0d8]" />
  </div>
);

export default function App() {
  return (
    <div className="flex h-[768px] w-[1366px] flex-col overflow-hidden bg-black font-['Noto_Sans',sans-serif]">
      <Title />
      <Menu />
      <div className="h-[632px] bg-black"><Paint /></div>
      <Vlc />
      <Taskbar />
    </div>
  );
}
